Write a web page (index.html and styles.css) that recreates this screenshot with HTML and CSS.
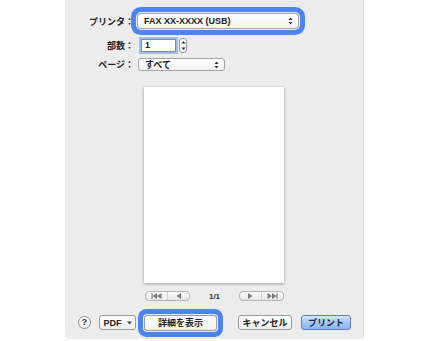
FILE: index.html
```html
<!DOCTYPE html>
<html lang="ja">
<head>
    <meta charset="UTF-8">
    <meta name="viewport" content="width=device-width, initial-scale=1.0">
    <title>プリント</title>
    <link rel="stylesheet" href="styles.css">
</head>
<body>
    <div class="panel">
        <div class="row row-printer">
            <span class="label">プリンタ：</span>
            <div class="popup popup-printer focus">
                <span class="popup-text">FAX XX-XXXX (USB)</span>
                <svg class="arrows" width="5" height="8" viewBox="0 0 5 8"><path d="M2.5 0.5 L4.5 3 L0.5 3 Z M2.5 7.5 L4.5 5 L0.5 5 Z" fill="#333"/></svg>
            </div>
        </div>

        <div class="row row-copies">
            <span class="label">部数：</span>
            <div class="copies-box">1</div>
            <div class="stepper">
                <svg width="5" height="11" viewBox="0 0 5 11"><path d="M2.5 1 L4.5 3.5 L0.5 3.5 Z M2.5 10 L4.5 7.5 L0.5 7.5 Z" fill="#333"/></svg>
            </div>
        </div>

        <div class="row row-pages">
            <span class="label">ページ：</span>
            <div class="popup popup-pages">
                <span class="popup-text jp">すべて</span>
                <svg class="arrows" width="5" height="8" viewBox="0 0 5 8"><path d="M2.5 0.5 L4.5 3 L0.5 3 Z M2.5 7.5 L4.5 5 L0.5 5 Z" fill="#333"/></svg>
            </div>
        </div>

        <div class="preview"></div>

        <div class="nav">
            <div class="nav-group">
                <span class="nav-half">
                    <svg width="11" height="6" viewBox="0 0 11 6"><path d="M0.5 0 H1.5 V6 H0.5 Z M1.5 3 L6 0 V6 Z M6 3 L10.5 0 V6 Z" fill="#777"/></svg>
                </span>
                <span class="nav-half">
                    <svg width="5" height="6" viewBox="0 0 5 6"><path d="M0.5 3 L5 0 V6 Z" fill="#777"/></svg>
                </span>
            </div>
            <span class="nav-count">1/1</span>
            <div class="nav-group">
                <span class="nav-half">
                    <svg width="5" height="6" viewBox="0 0 5 6"><path d="M4.5 3 L0 0 V6 Z" fill="#777"/></svg>
                </span>
                <span class="nav-half">
                    <svg width="11" height="6" viewBox="0 0 11 6"><path d="M0.5 0 L5 3 L0.5 6 Z M5 0 L9.5 3 L5 6 Z M9.5 0 H10.5 V6 H9.5 Z" fill="#777"/></svg>
                </span>
            </div>
        </div>

        <div class="buttons">
            <div class="help">?</div>
            <div class="btn btn-pdf">PDF <svg width="5" height="4" viewBox="0 0 5 4"><path d="M0 0.5 H5 L2.5 3.5 Z" fill="#444"/></svg></div>
            <div class="btn btn-details focus">詳細を表示</div>
            <div class="btn btn-cancel">キャンセル</div>
            <div class="btn btn-print">プリント</div>
        </div>
    </div>
</body>
</html>
```

FILE: styles.css
```css
body {
    margin: 0;
    background: #fff;
    font-family: "Liberation Sans", "Noto Sans CJK JP", sans-serif;
    color: #222;
}
.panel {
    width: 299px;
    height: 339px;
    margin-left: 65px;
    background: #ececec;
    border-right: 1px solid #e2e2e2;
    border-radius: 0 0 4px 4px;
    display: flex;
    flex-direction: column;
    box-sizing: border-box;
}
.row {
    display: flex;
    align-items: center;
}
.label {
    width: 69px;
    text-align: right;
    font-family: "Noto Sans CJK JP", sans-serif;
    font-size: 9px;
    font-weight: bold;
    color: #222;
    white-space: nowrap;
}
.row-printer {
    margin-top: 13px;
    height: 16px;
}
.row-copies {
    margin-top: 9px;
    height: 15px;
}
.row-pages {
    margin-top: 5px;
    height: 13px;
}
.popup {
    box-sizing: border-box;
    display: flex;
    align-items: center;
    justify-content: space-between;
    background: linear-gradient(#ffffff, #f3f3f3);
    border: 1px solid #a5a5a5;
    border-radius: 3px;
    padding: 0 5px 0 6px;
}
.popup-text {
    font-size: 9px;
    font-weight: bold;
    color: #222;
}
.popup-text.jp {
    font-family: "Noto Sans CJK JP", sans-serif;
}
.popup-printer {
    margin-left: 3px;
    width: 162px;
    height: 16px;
}
.popup-pages {
    margin-left: 4px;
    width: 87px;
    height: 13px;
}
.focus {
    box-shadow: 0 0 0 1px #e4ecf8, 0 0 0 6px #4c83ed;
    border-radius: 4px;
}
.copies-box {
    box-sizing: border-box;
    margin-left: 7px;
    width: 35px;
    height: 13px;
    background: #fff;
    border: 1px solid #8a8a8a;
    box-shadow: 0 0 0 2px #9fbdf0;
    font-size: 9px;
    font-weight: bold;
    line-height: 11px;
    padding-left: 3px;
}
.stepper {
    box-sizing: border-box;
    margin-left: 3px;
    width: 8px;
    height: 15px;
    background: linear-gradient(#ffffff, #eeeeee);
    border: 1px solid #9a9a9a;
    border-radius: 3px;
    display: flex;
    align-items: center;
    justify-content: center;
}
.preview {
    margin: 16px auto 0;
    width: 140px;
    height: 196px;
    background: #fff;
    box-shadow: 0 1px 3px rgba(0, 0, 0, 0.3), 0 0 1px rgba(0, 0, 0, 0.2);
}
.nav {
    margin-top: 8px;
    height: 10px;
    display: flex;
    justify-content: center;
    align-items: center;
}
.nav-group {
    box-sizing: border-box;
    width: 45px;
    height: 10px;
    display: flex;
    border: 1px solid #b3b3b3;
    border-radius: 4px;
    background: linear-gradient(#fbfbfb, #e8e8e8);
}
.nav-half {
    flex: 1;
    display: flex;
    align-items: center;
    justify-content: center;
}
.nav-half + .nav-half {
    border-left: 1px solid #cfcfcf;
}
.nav-count {
    margin: 0 17px 0 18px;
    width: 14px;
    text-align: center;
    font-size: 8px;
    font-weight: bold;
    color: #333;
}
.buttons {
    margin-top: 14px;
    padding-left: 13px;
    height: 15px;
    display: flex;
    align-items: center;
}
.help {
    box-sizing: border-box;
    width: 13px;
    height: 13px;
    border-radius: 50%;
    border: 1px solid #8c8c8c;
    background: linear-gradient(#ffffff, #eaeaea);
    font-size: 9px;
    font-weight: bold;
    text-align: center;
    line-height: 11px;
    color: #333;
}
.btn {
    box-sizing: border-box;
    height: 15px;
    display: flex;
    align-items: center;
    justify-content: center;
    background: linear-gradient(#ffffff, #efefef);
    border: 1px solid #9a9a9a;
    border-radius: 3px;
    font-family: "Noto Sans CJK JP", sans-serif;
    font-size: 9px;
    font-weight: bold;
    color: #222;
}
.btn-pdf {
    margin-left: 8px;
    width: 37px;
    gap: 5px;
    font-family: "Liberation Sans", sans-serif;
}
.btn-details {
    margin-left: 8px;
    width: 73px;
    height: 16px;
}
.btn-cancel {
    margin-left: 21px;
    width: 54px;
}
.btn-print {
    margin-left: 9px;
    width: 50px;
    background: linear-gradient(#d6e6fb, #a6c6f2 50%, #8cb6ef);
    border-color: #5f7fb8;
    color: #1a2540;
}
```
